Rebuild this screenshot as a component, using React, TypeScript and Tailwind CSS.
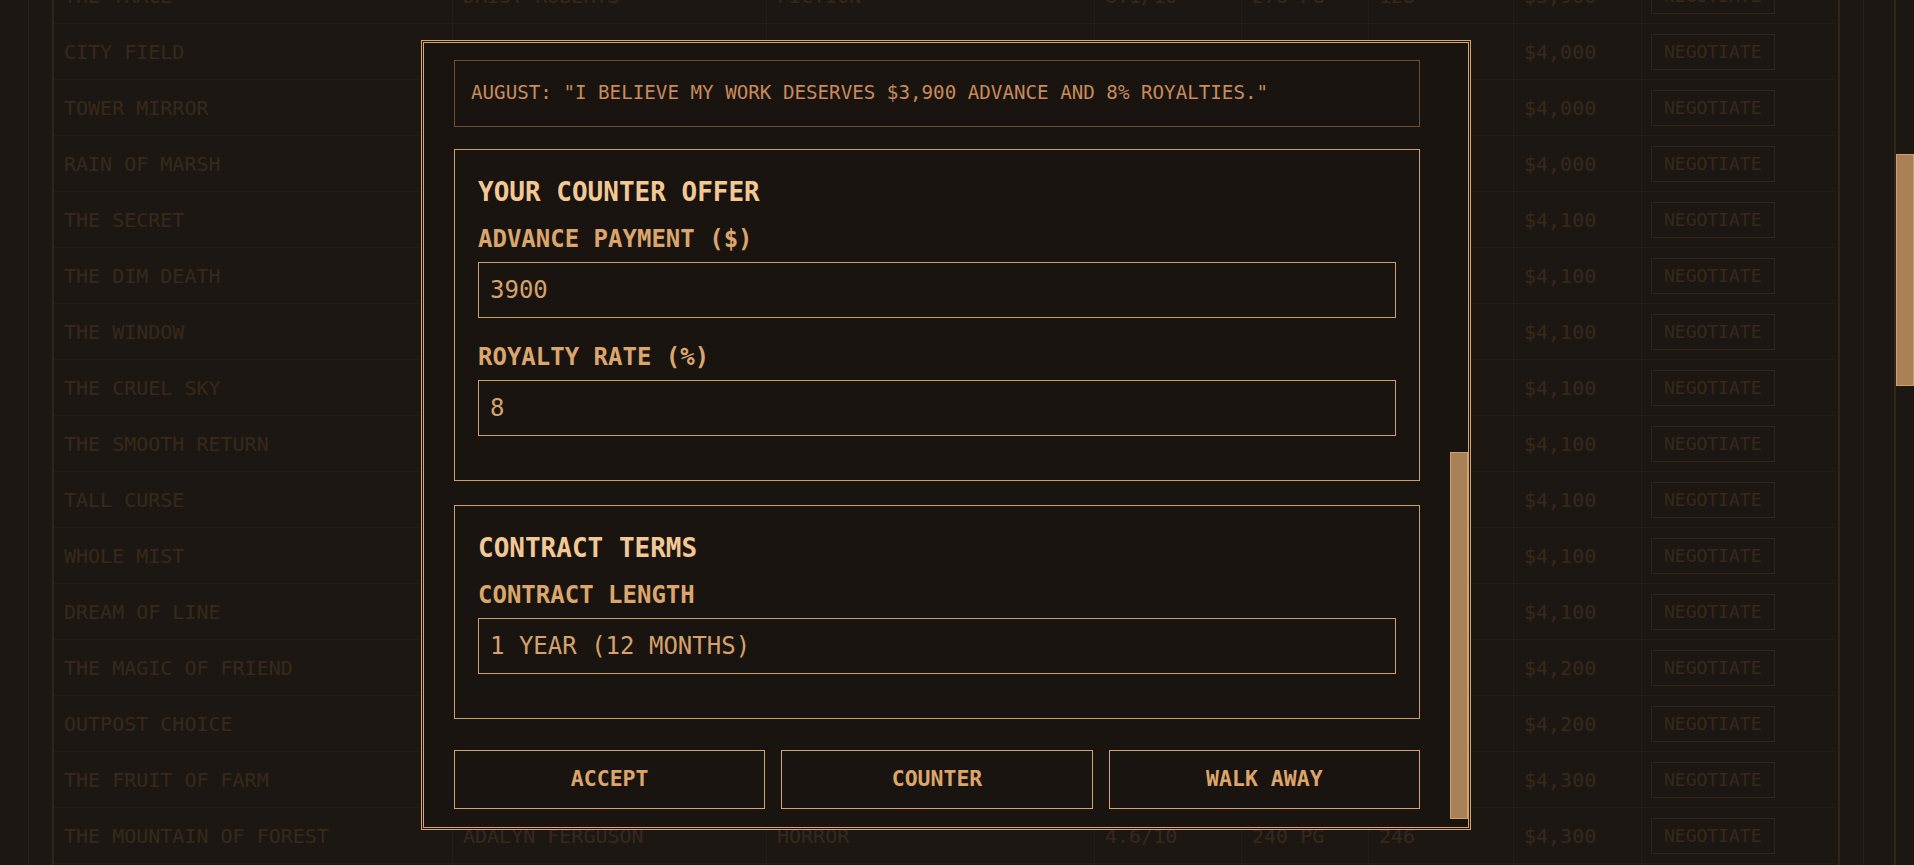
import { useLayoutEffect, useRef } from "react";

type Row = {
  title: string;
  author: string;
  genre: string;
  rating: string;
  pages: string;
  score: string;
  price: string;
};

const mono = "font-['DejaVu_Sans_Mono','Liberation_Mono',monospace]";

// rows above the fold (scrolled out of view)
const earlyRows: Row[] = [
  { title: "SILENT HARBOR", author: "MILES CARTER", genre: "MYSTERY", rating: "5.2/10", pages: "198 PG", score: "102", price: "$3,500" },
  { title: "THE GLASS ROAD", author: "NORA BENNETT", genre: "FANTASY", rating: "5.6/10", pages: "312 PG", score: "110", price: "$3,600" },
  { title: "EMBER LIGHT", author: "OWEN HAYES", genre: "ROMANCE", rating: "5.9/10", pages: "226 PG", score: "114", price: "$3,700" },
  { title: "THE LOST BELL", author: "RUBY SANDERS", genre: "THRILLER", rating: "6.0/10", pages: "254 PG", score: "119", price: "$3,800" },
  { title: "IRON GARDEN", author: "LEO MITCHELL", genre: "SCI-FI", rating: "6.0/10", pages: "301 PG", score: "121", price: "$3,800" },
];

const rows: Row[] = [
  { title: "THE TRACE", author: "DAISY ROBERTS", genre: "FICTION", rating: "6.1/10", pages: "276 PG", score: "128", price: "$3,900" },
  { title: "CITY FIELD", author: "HENRY WALLACE", genre: "DRAMA", rating: "6.2/10", pages: "244 PG", score: "131", price: "$4,000" },
  { title: "TOWER MIRROR", author: "CLARA JENKINS", genre: "FANTASY", rating: "6.3/10", pages: "330 PG", score: "140", price: "$4,000" },
  { title: "RAIN OF MARSH", author: "ETHAN BROOKS", genre: "MYSTERY", rating: "6.3/10", pages: "212 PG", score: "144", price: "$4,000" },
  { title: "THE SECRET", author: "AUGUST REED", genre: "THRILLER", rating: "6.5/10", pages: "268 PG", score: "152", price: "$4,100" },
  { title: "THE DIM DEATH", author: "IVY COLEMAN", genre: "HORROR", rating: "6.6/10", pages: "236 PG", score: "160", price: "$4,100" },
  { title: "THE WINDOW", author: "SAMUEL PRICE", genre: "FICTION", rating: "6.8/10", pages: "290 PG", score: "171", price: "$4,100" },
  { title: "THE CRUEL SKY", author: "LUCY MORGAN", genre: "SCI-FI", rating: "7.0/10", pages: "344 PG", score: "180", price: "$4,100" },
  { title: "THE SMOOTH RETURN", author: "JACK TURNER", genre: "ROMANCE", rating: "7.1/10", pages: "206 PG", score: "188", price: "$4,100" },
  { title: "TALL CURSE", author: "GRACE FOSTER", genre: "HORROR", rating: "7.3/10", pages: "258 PG", score: "195", price: "$4,100" },
  { title: "WHOLE MIST", author: "DYLAN PERRY", genre: "MYSTERY", rating: "7.4/10", pages: "222 PG", score: "203", price: "$4,100" },
  { title: "DREAM OF LINE", author: "HAZEL WARD", genre: "POETRY", rating: "7.6/10", pages: "148 PG", score: "210", price: "$4,100" },
  { title: "THE MAGIC OF FRIEND", author: "OSCAR GRAY", genre: "FANTASY", rating: "7.9/10", pages: "318 PG", score: "221", price: "$4,200" },
  { title: "OUTPOST CHOICE", author: "MAYA HUGHES", genre: "SCI-FI", rating: "8.2/10", pages: "286 PG", score: "229", price: "$4,200" },
  { title: "THE FRUIT OF FARM", author: "ELI RICHARDS", genre: "DRAMA", rating: "8.5/10", pages: "262 PG", score: "237", price: "$4,300" },
  { title: "THE MOUNTAIN OF FOREST", author: "ADALYN FERGUSON", genre: "HORROR", rating: "4.6/10", pages: "240 PG", score: "246", price: "$4,300" },
];

const fillTitles = [
  "THE BRIGHT HOUSE", "STONE OF RIVER", "NIGHT PASSAGE", "THE HOLLOW KING", "WINTER SONG",
  "THE LAST SIGNAL", "PALE ORCHARD", "THE QUIET STORM", "ASH AND SALT", "THE NARROW DOOR",
  "GOLDEN HOUR", "THE DEEP WELL", "BROKEN COMPASS", "THE SILVER LAKE", "RED HARVEST",
  "THE OPEN SEA", "DUST OF STARS", "THE WILD COAST", "LANTERN ROW", "THE COLD TRAIL",
  "MOTH AND FLAME", "THE FAR SHORE", "SHADOW ROOM", "THE WHITE HILL", "IRON TIDE",
  "THE LONG DARK", "VELVET SMOKE", "THE HIDDEN PATH", "SUMMER GHOST", "THE OLD BRIDGE", "FINAL CHAPTER",
];
const fillAuthors = ["NOAH BAKER", "EMMA HILL", "LIAM ROSS", "ZOE PARKER", "ADAM COOK", "ELLA KING"];
const fillGenres = ["FICTION", "MYSTERY", "FANTASY", "HORROR", "DRAMA", "SCI-FI"];

const lateRows: Row[] = fillTitles.map((title, i) => ({
  title,
  author: fillAuthors[i % fillAuthors.length],
  genre: fillGenres[(i + 2) % fillGenres.length],
  rating: `${5 + (i % 5)}.${(i * 3) % 10}/10`,
  pages: `${200 + ((i * 17) % 150)} PG`,
  score: `${250 + i * 6}`,
  price: `$4,${3 + Math.floor(i / 6)}00`,
}));

const gridCols = "grid-cols-[399px_314px_328px_147px_127px_145px_128px_196px]";

function TableRow({ r }: { r: Row }) {
  const cell = "flex items-center overflow-hidden whitespace-nowrap border-r border-[#4b3f34] px-[10px]";
  return (
    <div className={`grid h-[56px] ${gridCols} border-b border-[#4b3f34] text-[20px] text-[#c98d54]`}>
      <div className={cell}>{r.title}</div>
      <div className={cell}>{r.author}</div>
      <div className={cell}>{r.genre}</div>
      <div className={cell}>{r.rating}</div>
      <div className={cell}>{r.pages}</div>
      <div className={cell}>{r.score}</div>
      <div className={cell}>{r.price}</div>
      <div className="flex items-center px-[9px]">
        <button className="h-[36px] border border-[#957552] px-3 text-[18px] text-[#c98d54]">NEGOTIATE</button>
      </div>
    </div>
  );
}

function Field({ label, value }: { label: string; value: string }) {
  return (
    <div className="mb-5">
      <label className="mb-1 block text-[24px] font-bold leading-[38px] text-[#dba66b]">{label}</label>
      <input
        defaultValue={value}
        className={`${mono} block h-[56px] w-full border border-[#c9a06c] bg-transparent px-[11px] text-[24px] text-[#d6a26c] outline-none`}
      />
    </div>
  );
}

export default function App() {
  const pageRef = useRef<HTMLDivElement>(null);
  const modalRef = useRef<HTMLDivElement>(null);

  useLayoutEffect(() => {
    if (pageRef.current) pageRef.current.scrollTop = 574;
    const m = modalRef.current;
    if (m) m.scrollTop = m.scrollHeight - m.clientHeight - 12;
  }, []);

  return (
    <div ref={pageRef} className={`${mono} h-screen w-full overflow-y-auto bg-[#1c1713]`}>
      <div className="pr-[18px]">
        <div className="border-r-2 border-[#a17541]">
          <div className="ml-[28px] w-[1836px] border-x border-[#6c5948] px-[23px] pt-6 pb-[52px]">
            {/* page header */}
            <div className="flex h-[80px] items-center justify-between text-[#e0aa6a]">
              <h1 className="text-[32px] font-bold">MANUSCRIPT SUBMISSIONS</h1>
              <span className="text-[18px]">WEEK 14 · BUDGET $48,200</span>
            </div>
            <div className="mb-6 flex h-[78px] items-center gap-4 text-[18px] text-[#c98f56]">
              <span className="border border-[#9b7b56] px-4 py-2">ALL GENRES</span>
              <span className="border border-[#9b7b56] px-4 py-2">SORT: ASKING PRICE</span>
              <span className="border border-[#9b7b56] px-4 py-2">52 PENDING</span>
            </div>

            <div className="border-x-2 border-[#a17541]">
              <div className={`grid h-[56px] ${gridCols} border-b border-[#4b3f34] text-[18px] font-bold text-[#e0aa6a]`}>
                {["TITLE", "AUTHOR", "GENRE", "RATING", "LENGTH", "SCORE", "ASKING", "ACTION"].map((h, i) => (
                  <div key={h} className={`flex items-center px-[10px] ${i < 7 ? "border-r border-[#4b3f34]" : ""}`}>
                    {h}
                  </div>
                ))}
              </div>
              {[...earlyRows, ...rows, ...lateRows].map((r) => (
                <TableRow key={r.title} r={r} />
              ))}
            </div>
          </div>
        </div>
      </div>

      {/* page scrollbar thumb */}
      <div className="fixed top-[154px] right-0 z-20 h-[232px] w-[18px] border border-[#d0a06a] bg-[#a98157]" />

      {/* negotiation modal */}
      <div className="fixed top-0 bottom-0 left-0 right-[18px] z-10 flex items-start justify-center bg-[#1c1713]/85 pt-[40px] pr-[4px]">
        <div className="relative h-[790px] w-[1050px] border-[3px] border-double border-[#d8a56c] bg-[#1a1410]">
          <div ref={modalRef} className="h-full overflow-y-auto p-[30px] pr-[48px]">
            {/* upper part, scrolled out of view */}
            <div className="mb-6 h-[72px] text-[#f2c994]">
              <h2 className="text-[30px] font-bold leading-[40px]">CONTRACT NEGOTIATION</h2>
              <p className="text-[18px] text-[#c98b5b]">THE SECRET · AUGUST REED</p>
            </div>
            <div className="mb-6 h-[310px] overflow-hidden border border-[#c9a06a] p-6 text-[20px] text-[#d6a26c]">
              <h3 className="mb-3 text-[26px] font-bold text-[#f2c994]">MANUSCRIPT</h3>
              <p className="leading-[36px]">GENRE: THRILLER</p>
              <p className="leading-[36px]">LENGTH: 268 PAGES</p>
              <p className="leading-[36px]">QUALITY: 6.5/10</p>
              <p className="leading-[36px]">MARKET APPEAL: MODERATE</p>
              <p className="leading-[36px]">ASKING: $4,100 ADVANCE / 9% ROYALTIES</p>
            </div>
            <div className="mb-6 h-[230px] overflow-hidden border border-[#c9a06a] p-6 text-[20px] text-[#d6a26c]">
              <h3 className="mb-3 text-[26px] font-bold text-[#f2c994]">AUTHOR</h3>
              <p className="leading-[36px]">NAME: AUGUST REED</p>
              <p className="leading-[36px]">PREVIOUS WORKS: 2</p>
              <p className="leading-[36px]">REPUTATION: RISING</p>
            </div>
            <div className="mb-[42px] h-[140px] overflow-hidden border border-[#c9a06a] p-6 text-[20px] text-[#d6a26c]">
              <h3 className="mb-3 text-[26px] font-bold text-[#f2c994]">ROUND 2 OF 3</h3>
              <p className="leading-[36px]">YOU OFFERED $3,500 ADVANCE AND 6% ROYALTIES.</p>
            </div>

            {/* visible part */}
            <div className="mb-[22px] flex h-[67px] items-center whitespace-nowrap border border-[#6b4e35] px-4 text-[19.2px] text-[#c98b5b]">
              AUGUST: "I BELIEVE MY WORK DESERVES $3,900 ADVANCE AND 8% ROYALTIES."
            </div>

            <section className="mb-6 border border-[#c9a06a] px-[23px] py-6">
              <h3 className="mb-[10px] text-[26px] font-bold leading-[36px] text-[#f2c994]">YOUR COUNTER OFFER</h3>
              <Field label="ADVANCE PAYMENT ($)" value="3900" />
              <Field label="ROYALTY RATE (%)" value="8" />
            </section>

            <section className="border border-[#c9a06a] px-[23px] py-6">
              <h3 className="mb-[10px] text-[26px] font-bold leading-[36px] text-[#f2c994]">CONTRACT TERMS</h3>
              <div className="mb-5">
                <label className="mb-1 block text-[24px] font-bold leading-[38px] text-[#dba66b]">CONTRACT LENGTH</label>
                <select
                  defaultValue="12"
                  className={`${mono} block h-[56px] w-full appearance-none border border-[#c9a06c] bg-[#1a1410] px-[11px] text-[24px] text-[#d6a26c] outline-none`}
                >
                  <option value="6">6 MONTHS</option>
                  <option value="12">1 YEAR (12 MONTHS)</option>
                  <option value="24">2 YEARS (24 MONTHS)</option>
                </select>
              </div>
            </section>

            <div className="mt-[31px] grid grid-cols-3 gap-4">
              {["ACCEPT", "COUNTER", "WALK AWAY"].map((b) => (
                <button
                  key={b}
                  className="h-[59px] border border-[#d4a46e] text-[21.5px] font-bold text-[#dca56a]"
                >
                  {b}
                </button>
              ))}
            </div>
          </div>

          {/* modal scrollbar thumb */}
          <div className="absolute top-[409px] right-0 h-[367px] w-[18px] border border-[#d0a06a] bg-[#a98157]" />
        </div>
      </div>
    </div>
  );
}
